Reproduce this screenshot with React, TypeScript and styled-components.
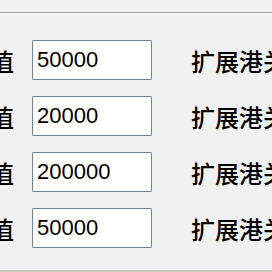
import React from "react";
import styled, { createGlobalStyle } from "styled-components";

const Global = createGlobalStyle`
  html, body { margin: 0; padding: 0; background: #f1f1f1; overflow: hidden; }
  #root { width: 272px; height: 272px; overflow: hidden; }
`;

const Page = styled.div`
  width: 272px;
  height: 272px;
  background: #f1f1f1;
  display: flex;
  flex-direction: column;
  overflow: hidden;
`;

const Divider = styled.div`
  height: 1px;
  background: #9a9a9a;
  border-bottom: 1px solid #fbfbfb;
  margin-top: 12px;
  flex-shrink: 0;
`;

const Form = styled.div`
  display: grid;
  grid-template-columns: 72px 120px max-content;
  grid-auto-rows: 40px;
  column-gap: 18px;
  row-gap: 16px;
  margin-left: -58px;
  padding-top: 26px;
  align-items: center;
  flex: 1;
  align-content: start;
`;

const Label = styled.span`
  font-family: "Noto Sans CJK SC", sans-serif;
  font-size: 24px;
  font-weight: 500;
  color: #000;
  text-align: right;
  white-space: nowrap;
`;

const Input = styled.div`
  box-sizing: border-box;
  height: 40px;
  width: 120px;
  background: #ffffff;
  border: 1px solid #76869a;
  border-radius: 1px;
  padding: 0 0 0 4px;
  display: flex;
  align-items: center;
  font-family: "Liberation Sans", Arial, sans-serif;
  font-size: 22px;
  color: #000;
`;

const Note = styled.span`
  margin-left: 21px;
  font-family: "Noto Sans CJK SC", sans-serif;
  font-size: 24px;
  font-weight: 500;
  color: #000;
  white-space: nowrap;
`;

const BottomLine = styled.div`
  height: 2px;
  background: #c9c9c2;
  flex-shrink: 0;
`;

const values = ["50000", "20000", "200000", "50000"];

export default function App() {
  return (
    <>
      <Global />
      <Page>
        <Divider />
        <Form>
          {values.map((v, i) => (
            <React.Fragment key={i}>
              <Label>最大值</Label>
              <Input>{v}</Input>
              <Note>扩展港关口</Note>
            </React.Fragment>
          ))}
        </Form>
        <BottomLine />
      </Page>
    </>
  );
}
